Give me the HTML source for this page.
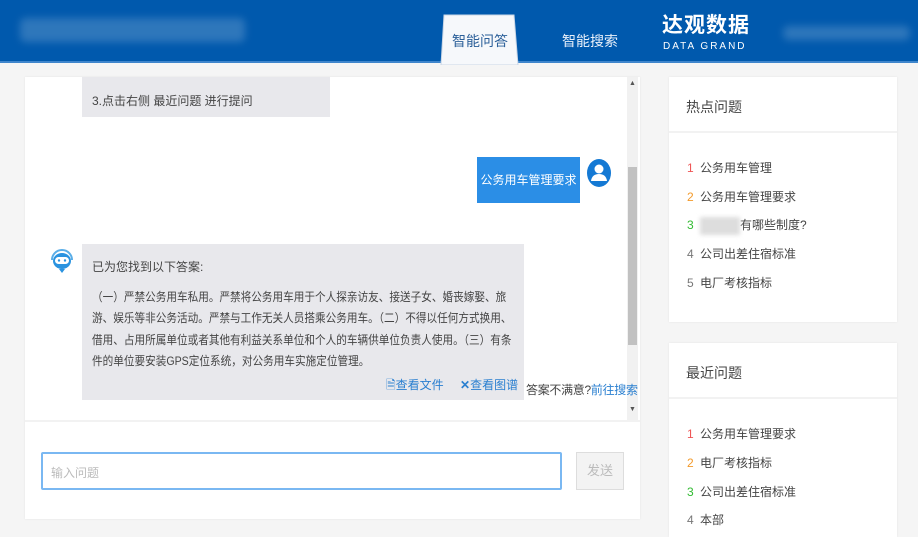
<!DOCTYPE html>
<html><head><meta charset="utf-8"><style>
*{margin:0;padding:0;box-sizing:border-box}
body{width:918px;height:557px;background:#fff;font-family:"Liberation Sans","Noto Sans CJK SC",sans-serif;position:relative;overflow:hidden;color:#333}
.abs{position:absolute;white-space:nowrap}
.bg{left:0;top:0;width:918px;height:537px;background:#f5f5f5}
.hdr{left:0;top:0;width:918px;height:63px;background:#0059ad;border-bottom:2px solid #3f86cc}
.blur{background:rgba(255,255,255,.18);filter:blur(4px);border-radius:6px}
.card{background:#fff;box-shadow:0 0 2px rgba(0,0,0,.08)}
.bub{background:#e8e8ec;font-size:12px;color:#444}
.li{font-size:12px;color:#444;left:687px}
.li b{font-weight:normal;display:inline-block;width:13px}
</style></head><body>
<div class="abs bg"></div>
<div class="abs hdr"></div>
<div class="abs blur" style="left:20px;top:18px;width:225px;height:24px"></div>
<div class="abs blur" style="left:783px;top:26px;width:127px;height:14px"></div>
<svg class="abs" style="left:440px;top:14px" width="80" height="51"><path d="M4 1H74L78 51H1Z" fill="#f6f8fb" stroke="#c9d6e6"/></svg>
<div class="abs" style="left:442px;top:31px;width:76px;text-align:center;font-size:14px;color:#2b5f99">智能问答</div>
<div class="abs" style="left:562px;top:31px;font-size:14px;color:#e8f0fa">智能搜索</div>
<div class="abs" style="left:662px;top:12px;font-size:21px;font-weight:bold;color:#fff;letter-spacing:1px;line-height:28px">达观数据</div>
<div class="abs" style="left:663px;top:41px;font-size:10px;color:#fff;letter-spacing:2px;line-height:12px">DATA GRAND</div>

<div class="abs card" style="left:25px;top:77px;width:615px;height:442px"></div>
<div class="abs" style="left:25px;top:420px;width:615px;height:2px;background:#f2f2f2"></div>
<div class="abs" style="left:627px;top:77px;width:11px;height:343px;background:#f1f1f1"></div>
<div class="abs" style="left:628px;top:167px;width:9px;height:178px;background:#c1c1c1"></div>
<div class="abs" style="left:629px;top:80px;font-size:7px;color:#555">▲</div>
<div class="abs" style="left:629px;top:406px;font-size:7px;color:#555">▼</div>

<div class="abs bub" style="left:82px;top:77px;width:248px;height:40px;padding:15px 0 0 10px">3.点击右侧 最近问题 进行提问</div>
<div class="abs" style="left:477px;top:157px;width:103px;height:46px;background:#2b8ee6;color:#fff;font-size:12px;line-height:46px;text-align:center">公务用车管理要求</div>
<svg class="abs" style="left:586px;top:158px" width="26" height="30"><ellipse cx="13" cy="15" rx="12" ry="14" fill="#1479d4"/><circle cx="13" cy="11" r="4.5" fill="#fff"/><path d="M5 23Q6 16 13 16Q20 16 21 23Z" fill="#fff"/></svg>
<svg class="abs" style="left:49px;top:245px" width="26" height="30"><path d="M3 15A10 10 0 0 1 23 15" fill="none" stroke="#5aaee8" stroke-width="2"/><ellipse cx="13" cy="16" rx="9" ry="8" fill="#2a93e0"/><rect x="6" y="12" width="14" height="7" rx="3.5" fill="#fff"/><circle cx="10" cy="15.5" r="1.2" fill="#2a93e0"/><circle cx="16" cy="15.5" r="1.2" fill="#2a93e0"/><path d="M10 24L13 28L16 24Z" fill="#2a93e0"/></svg>
<div class="abs bub" style="left:82px;top:244px;width:442px;height:156px;padding:13px 8px 0 10px;line-height:21.5px;font-size:12px">
<div style="margin-bottom:8px">已为您找到以下答案:</div>
<div style="transform:scaleX(0.885);transform-origin:0 0">（一）严禁公务用车私用。严禁将公务用车用于个人探亲访友、接送子女、婚丧嫁娶、旅<br>游、娱乐等非公务活动。严禁与工作无关人员搭乘公务用车。（二）不得以任何方式换用、<br>借用、占用所属单位或者其他有利益关系单位和个人的车辆供单位负责人使用。（三）有条<br>件的单位要安装GPS定位系统，对公务用车实施定位管理。</div>
</div>
<div class="abs" style="left:386px;top:376px;font-size:12px;color:#2a7fd0">🗎查看文件</div>
<div class="abs" style="left:460px;top:376px;font-size:12px;color:#2a7fd0"><b style="font-weight:bold">✕</b>查看图谱</div>
<div class="abs" style="left:526px;top:381px;font-size:12px;letter-spacing:-0.3px;color:#444">答案不满意?<span style="color:#2a7fd0">前往搜索</span></div>

<div class="abs" style="left:41px;top:452px;width:521px;height:38px;border:2px solid #7ab8f2;border-radius:2px;font-size:12px;color:#bbb;padding:10px 0 0 8px">输入问题</div>
<div class="abs" style="left:576px;top:452px;width:48px;height:38px;border:1px solid #ddd;background:#f3f3f3;color:#bbb;font-size:13px;text-align:center;line-height:36px">发送</div>

<div class="abs card" style="left:669px;top:77px;width:228px;height:245px"></div>
<div class="abs" style="left:669px;top:131px;width:228px;height:2px;background:#f2f2f2"></div>
<div class="abs" style="left:686px;top:97px;font-size:14px;color:#444">热点问题</div>
<div class="abs li" style="top:159px"><b style="color:#e55">1</b>公务用车管理</div>
<div class="abs li" style="top:188px"><b style="color:#f39a2b">2</b>公务用车管理要求</div>
<div class="abs li" style="top:216px"><b style="color:#3b3">3</b><span style="display:inline-block;width:40px;height:18px;background:#ddd;filter:blur(2px);vertical-align:middle"></span>有哪些制度?</div>
<div class="abs li" style="top:245px"><b style="color:#777">4</b>公司出差住宿标准</div>
<div class="abs li" style="top:274px"><b style="color:#777">5</b>电厂考核指标</div>

<div class="abs card" style="left:669px;top:343px;width:228px;height:194px"></div>
<div class="abs" style="left:669px;top:397px;width:228px;height:2px;background:#f2f2f2"></div>
<div class="abs" style="left:686px;top:363px;font-size:14px;color:#444">最近问题</div>
<div class="abs li" style="top:425px"><b style="color:#e55">1</b>公务用车管理要求</div>
<div class="abs li" style="top:454px"><b style="color:#f39a2b">2</b>电厂考核指标</div>
<div class="abs li" style="top:483px"><b style="color:#3b3">3</b>公司出差住宿标准</div>
<div class="abs li" style="top:511px"><b style="color:#777">4</b>本部</div>
<div class="abs" style="left:0;top:537px;width:918px;height:20px;background:#fff"></div>
</body></html>
